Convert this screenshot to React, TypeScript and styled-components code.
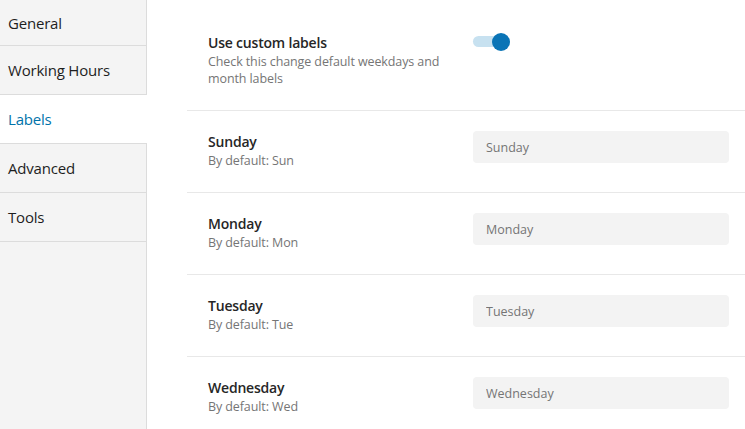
import styled, { createGlobalStyle } from "styled-components";

const GlobalStyle = createGlobalStyle`
  html, body {
    margin: 0;
    padding: 0;
    background: #fff;
  }
  body {
    font-family: "Open Sans", "Noto Sans", "Liberation Sans", sans-serif;
    color: #1e1e1e;
  }
`;

const Layout = styled.div`
  display: flex;
  width: 745px;
  height: 429px;
  overflow: hidden;
`;

const Sidebar = styled.nav`
  width: 146px;
  flex-shrink: 0;
  background: #f4f4f4;
  border-right: 1px solid #dcdcdc;
  display: flex;
  flex-direction: column;
`;

const NavItem = styled.div<{ $active?: boolean }>`
  height: 48px;
  flex-shrink: 0;
  display: flex;
  align-items: center;
  padding-left: 8px;
  font-size: 15px;
  letter-spacing: -0.2px;
  border-bottom: 1px solid #dcdcdc;
  color: ${(p) => (p.$active ? "#0073aa" : "#1e1e1e")};
  background: ${(p) => (p.$active ? "#fff" : "transparent")};
  margin-right: ${(p) => (p.$active ? "-1px" : "0")};
  &:first-child {
    height: 45px;
  }
`;

const Content = styled.main`
  flex: 1;
  padding-left: 40px;
  display: flex;
  flex-direction: column;
`;

const Row = styled.div<{ $first?: boolean }>`
  height: ${(p) => (p.$first ? "111px" : "82px")};
  flex-shrink: 0;
  border-bottom: 1px solid #e8e8e8;
  display: flex;
  align-items: flex-start;
  padding: ${(p) => (p.$first ? "32px 16px 0 21px" : "20px 16px 0 21px")};
  box-sizing: border-box;
`;

const Info = styled.div`
  width: 265px;
  flex-shrink: 0;
  padding-top: 1px;
  display: flex;
  flex-direction: column;
`;

const Title = styled.div`
  font-size: 14px;
  font-weight: 600;
  line-height: 20px;
  color: #262626;
  letter-spacing: -0.2px;
`;

const Description = styled.div`
  font-size: 12.5px;
  line-height: 17px;
  color: #757575;
  letter-spacing: -0.1px;
  max-width: 240px;
`;

const Input = styled.input`
  width: 256px;
  height: 32px;
  box-sizing: border-box;
  border: none;
  border-radius: 4px;
  background: #f3f3f3;
  padding: 0 13px;
  font-family: inherit;
  font-size: 12.5px;
  color: #757575;
  outline: none;
  &::placeholder {
    color: #757575;
  }
`;

const Toggle = styled.div`
  position: relative;
  margin-top: 4px;
  width: 36px;
  height: 11px;
  border-radius: 6px;
  background: #c7e1f0;
`;

const Knob = styled.span`
  position: absolute;
  right: -1px;
  top: 50%;
  transform: translateY(-50%);
  width: 18px;
  height: 18px;
  border-radius: 50%;
  background: #0a74b6;
`;

const days = [
  { name: "Sunday", short: "Sun" },
  { name: "Monday", short: "Mon" },
  { name: "Tuesday", short: "Tue" },
  { name: "Wednesday", short: "Wed" },
];

const navItems = ["General", "Working Hours", "Labels", "Advanced", "Tools"];

export default function App() {
  return (
    <>
      <GlobalStyle />
      <Layout>
        <Sidebar>
          {navItems.map((item) => (
            <NavItem key={item} $active={item === "Labels"}>
              {item}
            </NavItem>
          ))}
        </Sidebar>
        <Content>
          <Row $first>
            <Info>
              <Title>Use custom labels</Title>
              <Description>
                Check this change default weekdays and month labels
              </Description>
            </Info>
            <Toggle>
              <Knob />
            </Toggle>
          </Row>
          {days.map((d) => (
            <Row key={d.name}>
              <Info>
                <Title>{d.name}</Title>
                <Description>By default: {d.short}</Description>
              </Info>
              <Input placeholder={d.name} />
            </Row>
          ))}
        </Content>
      </Layout>
    </>
  );
}
